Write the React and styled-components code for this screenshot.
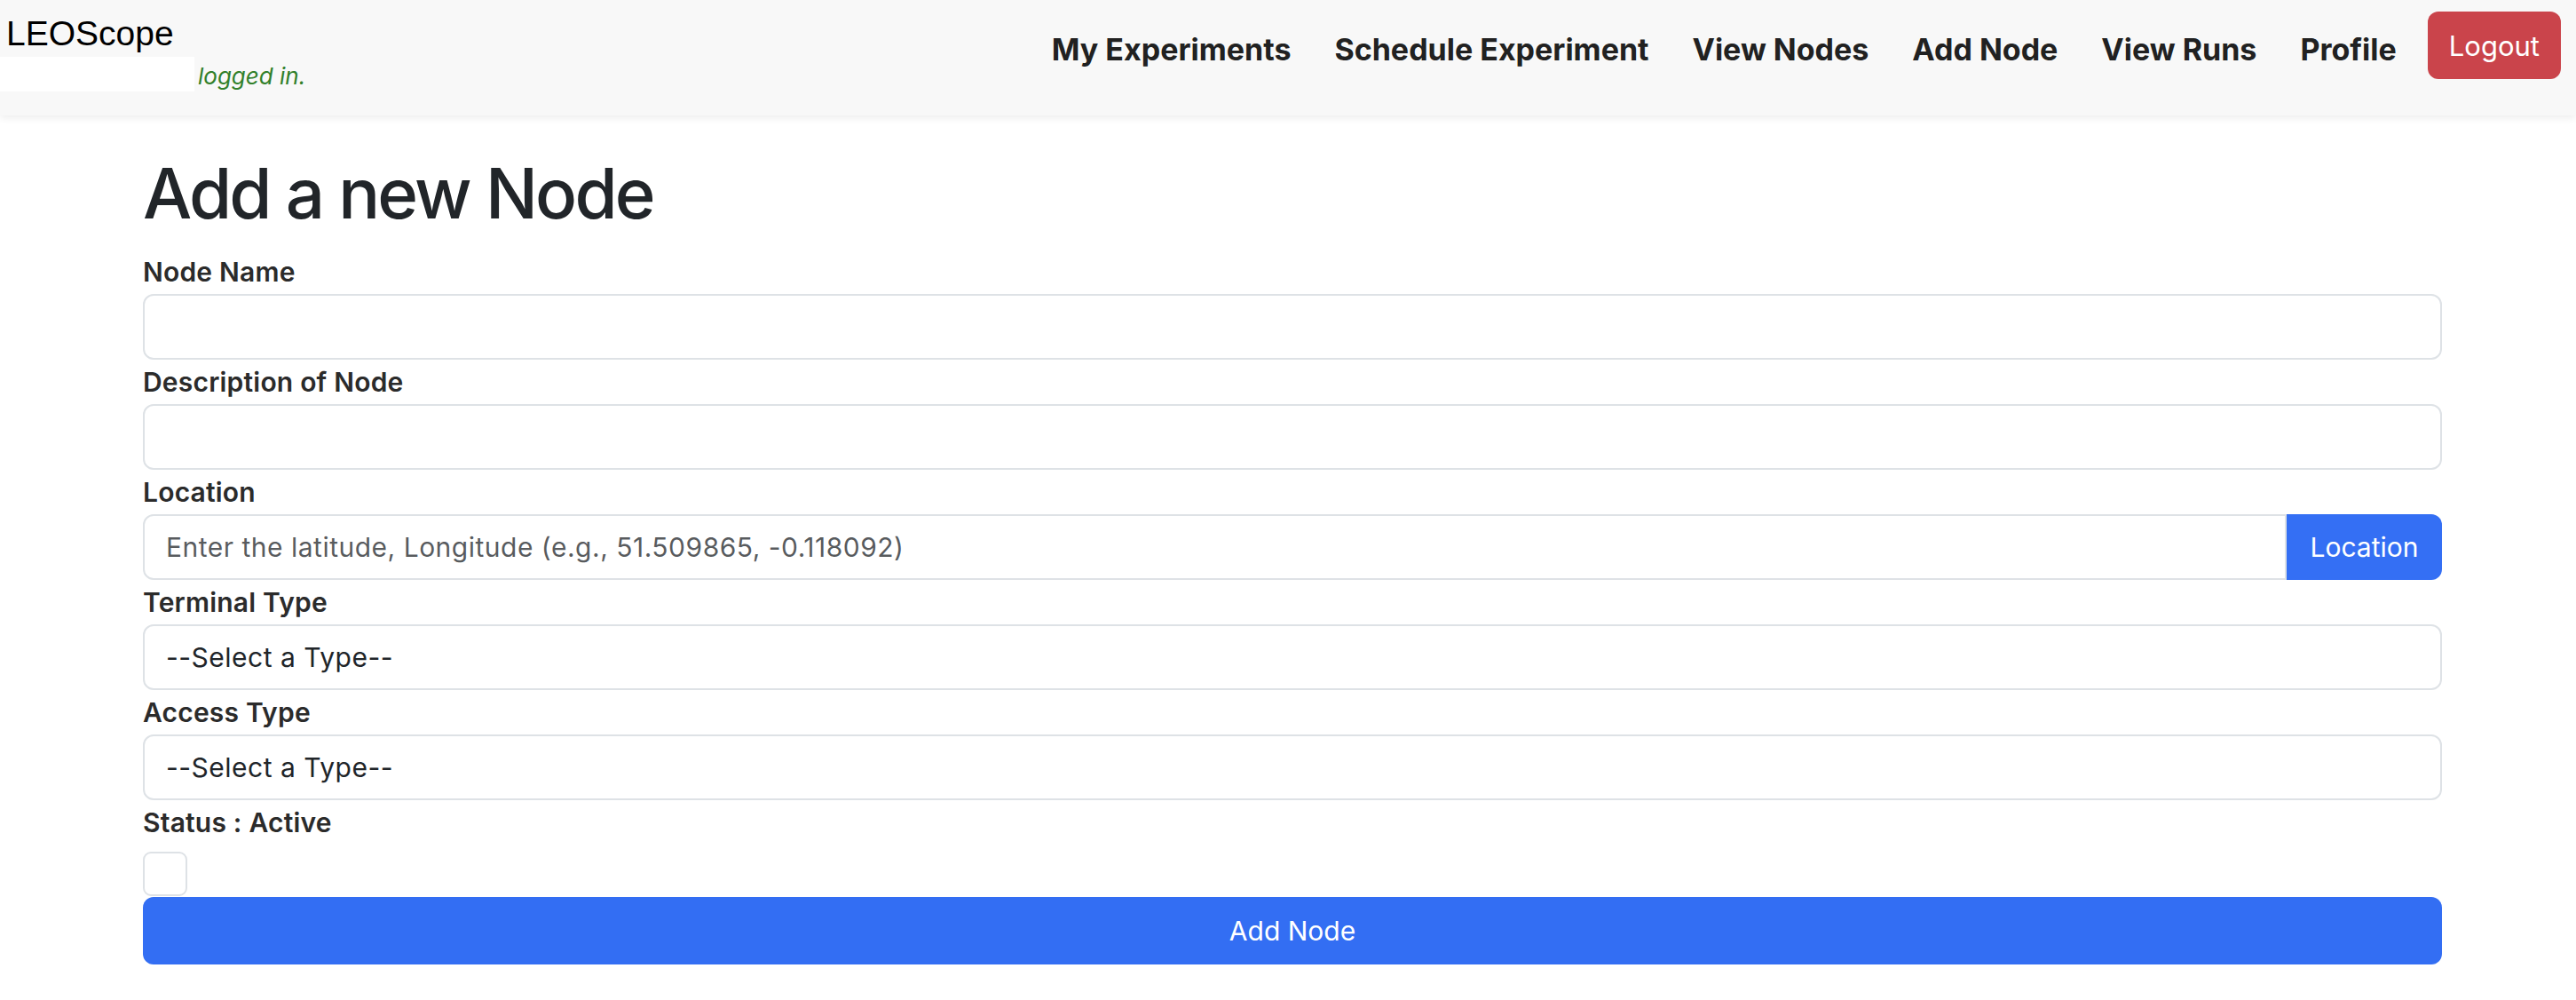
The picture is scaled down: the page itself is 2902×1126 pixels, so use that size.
import React, { useState } from 'react'
import styled, { createGlobalStyle } from 'styled-components'

const GlobalStyle = createGlobalStyle`
  body {
    margin: 0;
    background: #fff;
    font-family: Inter, "Noto Sans", "DejaVu Sans", sans-serif;
    color: #212529;
  }
`

const links = ['My Experiments', 'Schedule Experiment', 'View Nodes', 'Add Node', 'View Runs', 'Profile']

export default function App() {
  const [active, setActive] = useState(true)
  return (
    <>
      <GlobalStyle />
      <Navbar>
        <Brand>
          <BrandName>LEOScope</BrandName>
          <UserLine>
            <UserMask />
            <LoggedIn>logged in.</LoggedIn>
          </UserLine>
        </Brand>
        <NavMenu>
          {links.map((l) => (
            <NavLink key={l}>{l}</NavLink>
          ))}
          <LogoutButton>Logout</LogoutButton>
        </NavMenu>
      </Navbar>

      <Container>
        <Title>Add a new Node</Title>
        <form onSubmit={(e) => e.preventDefault()}>
          <Label>Node Name</Label>
          <Input type="text" />
          <Label>Description of Node</Label>
          <Input type="text" />
          <Label>Location</Label>
          <InputGroup>
            <Input type="text" grouped placeholder="Enter the latitude, Longitude (e.g., 51.509865, -0.118092)" />
            <GroupButton type="button">Location</GroupButton>
          </InputGroup>
          <Label>Terminal Type</Label>
          <Select defaultValue="">
            <option value="">--Select a Type--</option>
          </Select>
          <Label>Access Type</Label>
          <Select defaultValue="">
            <option value="">--Select a Type--</option>
          </Select>
          <Label>Status : {active ? 'Active' : 'Inactive'}</Label>
          <Checkbox type="checkbox" checked={false} onChange={() => setActive(true)} />
          <SubmitButton type="submit">Add Node</SubmitButton>
        </form>
      </Container>
    </>
  )
}

const Navbar = styled.nav`
  display: flex;
  justify-content: space-between;
  align-items: flex-start;
  height: 130px;
  background: #f8f8f8;
  box-shadow: 0 3px 8px rgba(0, 0, 0, 0.07);
`

const Brand = styled.div`
  display: flex;
  flex-direction: column;
`

const BrandName = styled.div`
  font-family: "Liberation Sans", Arial, sans-serif;
  font-size: 39px;
  line-height: 39px;
  color: #000;
  padding: 18px 0 0 7px;
`

const UserLine = styled.div`
  display: flex;
  align-items: center;
  margin-top: 7px;
`

const UserMask = styled.span`
  display: block;
  width: 219px;
  height: 39px;
  background: #fff;
`

const LoggedIn = styled.span`
  font-style: italic;
  font-size: 26px;
  color: #32802b;
  margin-left: 4px;
  padding-top: 4px;
`

const NavMenu = styled.div`
  display: flex;
  align-items: center;
  height: 76px;
  margin: 13px 17px 0 0;
`

const NavLink = styled.a`
  font-size: 34px;
  font-weight: 700;
  color: #212121;
  margin-right: 49px;
  padding-top: 8px;
  cursor: pointer;
  &:last-of-type {
    margin-right: 35px;
  }
`

const LogoutButton = styled.button`
  height: 76px;
  padding: 0 24px;
  border: none;
  border-radius: 12px;
  background: #ca444b;
  color: #fff;
  font-family: inherit;
  font-size: 31px;
  cursor: pointer;
`

const Container = styled.main`
  width: 2590px;
  margin-left: 161px;
`

const Title = styled.h1`
  font-size: 78px;
  font-weight: 500;
  letter-spacing: -2.8px;
  line-height: 94px;
  margin: 41px 0 16px;
  color: #212529;
`

const Label = styled.label`
  display: block;
  font-size: 30px;
  font-weight: 600;
  letter-spacing: 0.2px;
  line-height: 50px;
  color: #2b2b2b;
`

const fieldBase = `
  display: block;
  box-sizing: border-box;
  width: 100%;
  height: 74px;
  padding: 0 24px;
  border: 2px solid #dee2e6;
  border-radius: 12px;
  background: #fff;
  font-family: inherit;
  font-size: 30px;
  letter-spacing: 0.5px;
  color: #212529;
  outline: none;
`

const Input = styled.input`
  ${fieldBase}
  border-radius: ${(p) => (p.grouped ? '12px 0 0 12px' : '12px')};
  &::placeholder {
    color: rgba(33, 37, 41, 0.75);
  }
`

const Select = styled.select`
  ${fieldBase}
  appearance: none;
`

const InputGroup = styled.div`
  display: flex;
  align-items: stretch;
`

const GroupButton = styled.button`
  flex: 0 0 175px;
  height: 74px;
  border: none;
  border-radius: 0 12px 12px 0;
  background: #346ff4;
  color: #fff;
  font-family: inherit;
  font-size: 30px;
  cursor: pointer;
`

const Checkbox = styled.input`
  appearance: none;
  display: block;
  width: 50px;
  height: 50px;
  margin: 8px 0 1px;
  border: 2px solid #dee2e6;
  border-radius: 9px;
  background: #fff;
  box-sizing: border-box;
`

const SubmitButton = styled.button`
  display: block;
  width: 100%;
  height: 76px;
  border: none;
  border-radius: 12px;
  background: #336ef3;
  color: #fff;
  font-family: inherit;
  font-size: 30px;
  cursor: pointer;
`
